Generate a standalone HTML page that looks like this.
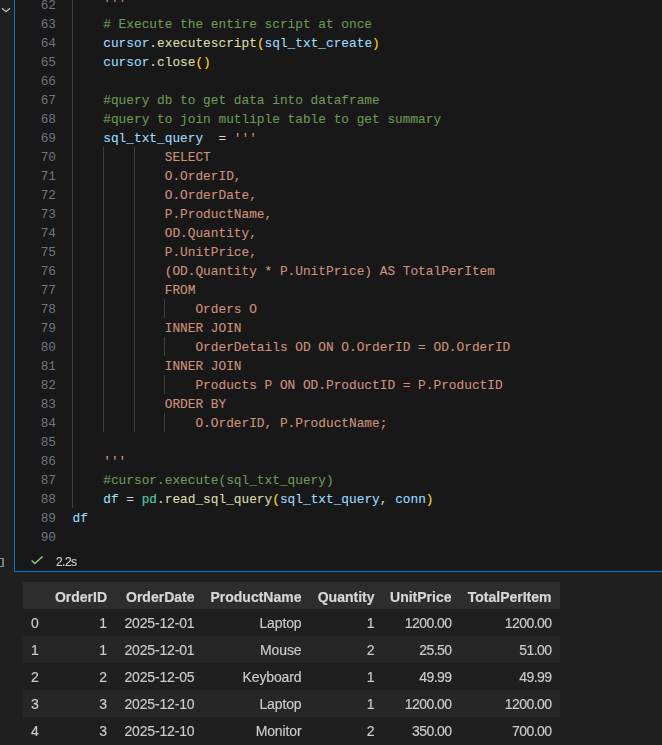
<!DOCTYPE html>
<html><head><meta charset="utf-8">
<style>
html,body{margin:0;padding:0;}
body{width:662px;height:745px;overflow:hidden;background:#1f1f1f;position:relative;}
.cell{position:absolute;left:14px;top:-20px;width:720px;height:591px;background:#181818;border-left:1px solid #0078d4;border-bottom:1px solid #0078d4;}
.ln{position:absolute;left:0;width:56px;text-align:right;color:#6E7681;font:12.8px/19px "Liberation Mono",monospace;height:19px;white-space:pre;}
.cl{position:absolute;font:12.8px/19px "Liberation Mono",monospace;height:19px;white-space:pre;color:#D4D4D4;-webkit-text-stroke:0.12px currentColor;}
.g{position:absolute;width:1px;background:#404040;}
.cm{color:#6A9955} .v{color:#9CDCFE} .f{color:#DCDCAA} .s{color:#CE9178} .o{color:#D4D4D4} .b1{color:#FFD700} .m{color:#4EC9B0}
.chev{position:absolute;left:1px;top:7px;}
.br{position:absolute;left:-2px;top:554px;color:#9d9d9d;font:13px/16px "Liberation Sans",sans-serif;}
.status{position:absolute;left:31px;top:555px;}
.time{will-change:transform;position:absolute;left:56px;top:554px;color:#cccccc;font:12px/16px "Liberation Sans",sans-serif;letter-spacing:-0.55px;-webkit-text-stroke:0.15px currentColor;}
table.df{will-change:transform;position:absolute;left:23px;top:582px;border-collapse:collapse;table-layout:fixed;width:537px;font:13.5px "Liberation Sans",sans-serif;color:#cccccc;}
table.df th, table.df td{height:27px;padding:0 8.5px 0 0;text-align:right;white-space:nowrap;box-sizing:border-box;}
table.df thead th{font-weight:bold;font-size:14px;background:#2d2d2d;padding-top:2px;-webkit-text-stroke:0.2px currentColor;color:#d6d6d6;}
table.df tbody th, table.df td{font-size:14px;padding-top:1px;-webkit-text-stroke:0.15px currentColor;}
table.df td:nth-child(3){letter-spacing:-0.15px;}
table.df td:nth-child(4){letter-spacing:-0.12px;}
table.df td:nth-child(6),table.df td:nth-child(7){letter-spacing:-0.55px;}
table.df tbody th{font-weight:normal;text-align:left;padding-left:8px;}
table.df tbody tr:nth-child(even){background:#262626;}
</style></head><body>
<div class="cell"></div>
<svg class="chev" width="10" height="7" viewBox="0 0 10 7"><path d="M1 1.3 L5 4.7 L9 1.3" stroke="#c5c5c5" stroke-width="1.15" fill="none"/></svg>
<div class="g" style="left:72.00px;top:-5.5px;height:513px"></div>
<div class="g" style="left:102.78px;top:146.5px;height:285px"></div>
<div class="g" style="left:133.56px;top:146.5px;height:285px"></div>
<div class="g" style="left:164.34px;top:298.5px;height:19px"></div>
<div class="g" style="left:164.34px;top:336.5px;height:19px"></div>
<div class="g" style="left:164.34px;top:374.5px;height:19px"></div>
<div class="g" style="left:164.34px;top:412.5px;height:19px"></div>
<div class="ln" style="top:-4.5px">62</div>
<div class="cl" style="top:-6.5px;left:103.28px"><span class="s">&#x27;&#x27;&#x27;</span></div>
<div class="ln" style="top:14.5px">63</div>
<div class="cl" style="top:14.5px;left:103.28px"><span class="cm"># Execute the entire script at once</span></div>
<div class="ln" style="top:33.5px">64</div>
<div class="cl" style="top:33.5px;left:103.28px"><span class="v">cursor</span><span class="o">.</span><span class="f">executescript</span><span class="b1">(</span><span class="v">sql_txt_create</span><span class="b1">)</span></div>
<div class="ln" style="top:52.5px">65</div>
<div class="cl" style="top:52.5px;left:103.28px"><span class="v">cursor</span><span class="o">.</span><span class="f">close</span><span class="b1">()</span></div>
<div class="ln" style="top:71.5px">66</div>
<div class="cl" style="top:71.5px;left:72.50px"></div>
<div class="ln" style="top:90.5px">67</div>
<div class="cl" style="top:90.5px;left:103.28px"><span class="cm">#query db to get data into dataframe</span></div>
<div class="ln" style="top:109.5px">68</div>
<div class="cl" style="top:109.5px;left:103.28px"><span class="cm">#query to join mutliple table to get summary</span></div>
<div class="ln" style="top:128.5px">69</div>
<div class="cl" style="top:128.5px;left:103.28px"><span class="v">sql_txt_query</span><span class="o">  = </span><span class="s">&#x27;&#x27;&#x27;</span></div>
<div class="ln" style="top:147.5px">70</div>
<div class="cl" style="top:147.5px;left:103.28px"><span class="s">        SELECT</span></div>
<div class="ln" style="top:166.5px">71</div>
<div class="cl" style="top:166.5px;left:103.28px"><span class="s">        O.OrderID,</span></div>
<div class="ln" style="top:185.5px">72</div>
<div class="cl" style="top:185.5px;left:103.28px"><span class="s">        O.OrderDate,</span></div>
<div class="ln" style="top:204.5px">73</div>
<div class="cl" style="top:204.5px;left:103.28px"><span class="s">        P.ProductName,</span></div>
<div class="ln" style="top:223.5px">74</div>
<div class="cl" style="top:223.5px;left:103.28px"><span class="s">        OD.Quantity,</span></div>
<div class="ln" style="top:242.5px">75</div>
<div class="cl" style="top:242.5px;left:103.28px"><span class="s">        P.UnitPrice,</span></div>
<div class="ln" style="top:261.5px">76</div>
<div class="cl" style="top:261.5px;left:103.28px"><span class="s">        (OD.Quantity * P.UnitPrice) AS TotalPerItem</span></div>
<div class="ln" style="top:280.5px">77</div>
<div class="cl" style="top:280.5px;left:103.28px"><span class="s">        FROM</span></div>
<div class="ln" style="top:299.5px">78</div>
<div class="cl" style="top:299.5px;left:103.28px"><span class="s">            Orders O</span></div>
<div class="ln" style="top:318.5px">79</div>
<div class="cl" style="top:318.5px;left:103.28px"><span class="s">        INNER JOIN</span></div>
<div class="ln" style="top:337.5px">80</div>
<div class="cl" style="top:337.5px;left:103.28px"><span class="s">            OrderDetails OD ON O.OrderID = OD.OrderID</span></div>
<div class="ln" style="top:356.5px">81</div>
<div class="cl" style="top:356.5px;left:103.28px"><span class="s">        INNER JOIN</span></div>
<div class="ln" style="top:375.5px">82</div>
<div class="cl" style="top:375.5px;left:103.28px"><span class="s">            Products P ON OD.ProductID = P.ProductID</span></div>
<div class="ln" style="top:394.5px">83</div>
<div class="cl" style="top:394.5px;left:103.28px"><span class="s">        ORDER BY</span></div>
<div class="ln" style="top:413.5px">84</div>
<div class="cl" style="top:413.5px;left:103.28px"><span class="s">            O.OrderID, P.ProductName;</span></div>
<div class="ln" style="top:432.5px">85</div>
<div class="cl" style="top:432.5px;left:72.50px"></div>
<div class="ln" style="top:451.5px">86</div>
<div class="cl" style="top:451.5px;left:103.28px"><span class="s">&#x27;&#x27;&#x27;</span></div>
<div class="ln" style="top:470.5px">87</div>
<div class="cl" style="top:470.5px;left:103.28px"><span class="cm">#cursor.execute(sql_txt_query)</span></div>
<div class="ln" style="top:489.5px">88</div>
<div class="cl" style="top:489.5px;left:103.28px"><span class="v">df</span><span class="o"> = </span><span class="m">pd</span><span class="o">.</span><span class="f">read_sql_query</span><span class="b1">(</span><span class="v">sql_txt_query</span><span class="o">, </span><span class="v">conn</span><span class="b1">)</span></div>
<div class="ln" style="top:508.5px">89</div>
<div class="cl" style="top:508.5px;left:72.50px"><span class="v">df</span></div>
<div class="ln" style="top:527.5px">90</div>
<div class="cl" style="top:527.5px;left:72.50px"></div>
<div style="position:absolute;left:0;top:559px;width:2px;height:7px;background:#161616"></div><div style="position:absolute;left:0;top:558px;width:4px;height:1px;background:#8a8a8a"></div><div style="position:absolute;left:2px;top:558px;width:2px;height:9px;background:#7c7c7c"></div><div style="position:absolute;left:0;top:566px;width:4px;height:1px;background:#8a8a8a"></div>
<svg class="status" width="13" height="10" viewBox="0 0 13 10"><path d="M0.6 5.4 L3.8 8.6 L11.6 1.4" stroke="#80cf80" stroke-width="1.4" fill="none"/></svg>
<div class="time">2.2s</div>
<table class="df"><colgroup><col style="width:23px"><col style="width:69.5px"><col style="width:87.5px"><col style="width:107px"><col style="width:73px"><col style="width:77px"><col style="width:100px"></colgroup><thead><tr><th></th><th>OrderID</th><th>OrderDate</th><th>ProductName</th><th>Quantity</th><th>UnitPrice</th><th>TotalPerItem</th></tr></thead><tbody><tr><th>0</th><td>1</td><td>2025-12-01</td><td>Laptop</td><td>1</td><td>1200.00</td><td>1200.00</td></tr><tr><th>1</th><td>1</td><td>2025-12-01</td><td>Mouse</td><td>2</td><td>25.50</td><td>51.00</td></tr><tr><th>2</th><td>2</td><td>2025-12-05</td><td>Keyboard</td><td>1</td><td>49.99</td><td>49.99</td></tr><tr><th>3</th><td>3</td><td>2025-12-10</td><td>Laptop</td><td>1</td><td>1200.00</td><td>1200.00</td></tr><tr><th>4</th><td>3</td><td>2025-12-10</td><td>Monitor</td><td>2</td><td>350.00</td><td>700.00</td></tr></tbody></table>
</body></html>
